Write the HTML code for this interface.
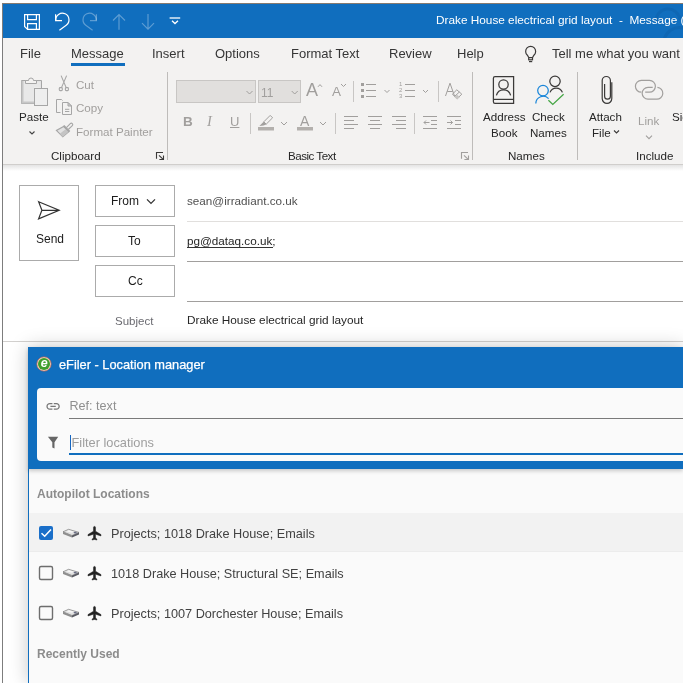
<!DOCTYPE html>
<html><head><meta charset="utf-8">
<style>
*{margin:0;padding:0;box-sizing:border-box}
html,body{width:683px;height:683px;overflow:hidden;background:#fff;font-family:"Liberation Sans",sans-serif}
body{will-change:transform}
.a{position:absolute;white-space:nowrap}
.t{z-index:3}
#frame{position:absolute;left:2px;top:3px;width:681px;height:680px;background:#fff;border-left:1px solid #7d7d7d;border-top:1px solid #857a70}
#title{position:absolute;left:3px;top:4px;width:680px;height:34px;background:#106ebe}
#tabs{position:absolute;left:3px;top:38px;width:680px;height:32px;background:#f3f2f1}
#ribbon{position:absolute;left:3px;top:70px;width:680px;height:95px;background:#f3f2f1;border-bottom:1px solid #d0cecc}
#rshadow{position:absolute;left:3px;top:165px;width:680px;height:6px;background:linear-gradient(#e4e4e4,#fff)}
.tab{font-size:13px;color:#363636;top:46px}
.rl{font-size:11.6px;color:#262626}
.dis{color:#a19f9d}
.sep{position:absolute;width:1px;background:#bebcba}
svg{position:absolute;overflow:visible}
</style></head><body>
<div id="frame"></div>
<div id="title"></div>
<div id="tabs"></div>
<div id="ribbon"></div>
<div id="rshadow"></div>


<svg width="683" height="683" style="left:0;top:0;z-index:1" fill="none">
<defs><clipPath id="tb"><rect x="3" y="4" width="680" height="34"/></clipPath></defs>
<g clip-path="url(#tb)" stroke="rgba(0,20,60,0.08)" stroke-width="3">
<path d="M656 22A12 12 0 0 1 680 20"/>
<path d="M664 40A16 16 0 0 1 683 28"/>
</g>
</svg>
<!-- title text -->
<div class="a t" style="left:436px;top:13px;font-size:11.8px;color:#fff">Drake House electrical grid layout&nbsp; -&nbsp; Message (</div>

<!-- tabs -->
<div class="a tab" style="left:20px">File</div>
<div class="a tab" style="left:71px">Message</div>
<div class="a" style="left:71px;top:63px;width:54px;height:3px;background:#106ebe"></div>
<div class="a tab" style="left:152px">Insert</div>
<div class="a tab" style="left:215px">Options</div>
<div class="a tab" style="left:291px">Format Text</div>
<div class="a tab" style="left:389px">Review</div>
<div class="a tab" style="left:457px">Help</div>
<div class="a tab" style="left:552px">Tell me what you want</div>

<!-- ribbon labels -->
<div class="a rl" style="left:19px;top:110px">Paste</div>
<div class="a rl dis" style="left:76px;top:78px">Cut</div>
<div class="a rl dis" style="left:76px;top:101px">Copy</div>
<div class="a rl dis" style="left:76px;top:125px">Format Painter</div>
<div class="a rl" style="left:51px;top:149px">Clipboard</div>
<div class="a rl" style="left:288px;top:149px;letter-spacing:-0.5px">Basic Text</div>
<div class="a rl" style="left:483px;top:110px">Address</div>
<div class="a rl" style="left:491px;top:126px">Book</div>
<div class="a rl" style="left:532px;top:110px">Check</div>
<div class="a rl" style="left:530px;top:126px">Names</div>
<div class="a rl" style="left:508px;top:149px">Names</div>
<div class="a rl" style="left:589px;top:110px">Attach</div>
<div class="a rl" style="left:592px;top:126px">File</div>
<div class="a rl dis" style="left:638px;top:114px">Link</div>
<div class="a rl" style="left:672px;top:110px">Sig</div>
<div class="a rl" style="left:636px;top:149px">Include</div>

<div class="sep" style="left:167px;top:72px;height:88px"></div>
<div class="sep" style="left:472px;top:72px;height:88px"></div>
<div class="sep" style="left:577px;top:72px;height:88px"></div>


<div class="a t" style="left:261px;top:85.5px;font-size:12px;color:#a19f9d">11</div>
<div class="a" style="left:306px;top:80px;font-size:18px;color:#a19f9d">A</div>
<div class="a" style="left:332px;top:83.5px;font-size:13.5px;color:#a19f9d">A</div>
<div class="a" style="left:183px;top:113.5px;font-size:13.5px;font-weight:bold;color:#a19f9d">B</div>
<div class="a" style="left:207px;top:113px;font-size:14.5px;font-style:italic;font-family:'Liberation Serif',serif;color:#a19f9d">I</div>
<div class="a" style="left:230px;top:114px;font-size:13px;color:#a19f9d;text-decoration:underline">U</div>
<div class="a" style="left:300px;top:113px;font-size:14px;color:#a19f9d">A</div>
<div class="a" style="left:399px;top:81px;font-size:6px;line-height:6px;color:#a19f9d">1<br>2<br>3</div>
<!-- compose -->
<div class="a" style="left:19px;top:185px;width:60px;height:76px;border:1px solid #ababab"></div>
<div class="a" style="left:36px;top:232px;font-size:12px;color:#1c1c1c">Send</div>
<div class="a" style="left:95px;top:185px;width:80px;height:32px;border:1px solid #ababab"></div>
<div class="a" style="left:111px;top:194px;font-size:12px;color:#1c1c1c">From</div>
<div class="a" style="left:95px;top:225px;width:80px;height:32px;border:1px solid #ababab"></div>
<div class="a" style="left:128px;top:234px;font-size:12px;color:#1c1c1c">To</div>
<div class="a" style="left:95px;top:265px;width:80px;height:32px;border:1px solid #ababab"></div>
<div class="a" style="left:128px;top:274px;font-size:12px;color:#1c1c1c">Cc</div>
<div class="a" style="left:187px;top:194px;font-size:11.7px;color:#505050">sean@irradiant.co.uk</div>
<div class="a" style="left:187px;top:221px;width:496px;height:1px;background:#e1dfdd"></div>
<div class="a" style="left:187px;top:234px;font-size:11.7px;color:#262626">pg@dataq.co.uk;</div>
<div class="a" style="left:187px;top:247px;width:86px;height:1px;background:#333"></div>
<div class="a" style="left:187px;top:261px;width:496px;height:1px;background:#a19f9d"></div>
<div class="a" style="left:187px;top:301px;width:496px;height:1px;background:#a19f9d"></div>
<div class="a" style="left:115px;top:314.5px;font-size:11.5px;color:#6a6a70">Subject</div>
<div class="a" style="left:187px;top:313px;font-size:11.8px;color:#262626">Drake House electrical grid layout</div>
<div class="a" style="left:3px;top:341px;width:680px;height:1px;background:#d2d0ce"></div>

<!-- dialog -->
<div class="a" style="left:28px;top:347px;width:655px;height:336px;background:#fafafa;border-left:1px solid #106ebe;box-shadow:0 0 18px rgba(0,0,0,.22)"></div>
<div class="a" style="left:28px;top:347px;width:655px;height:122px;background:#106ebe;box-shadow:0 2px 4px rgba(0,0,0,.2)"></div>
<div class="a" style="left:59px;top:357px;font-size:12.8px;color:#fff;-webkit-text-stroke:0.25px #fff">eFiler - Location manager</div>
<div class="a" style="left:37px;top:388px;width:646px;height:73px;background:#fafafa;border-radius:4px 0 0 4px"></div>
<div class="a" style="left:69.5px;top:398.5px;font-size:12.6px;color:#8f8f8f">Ref: text</div>
<div class="a" style="left:69px;top:417.5px;width:614px;height:1px;background:#7a7a7a"></div>
<div class="a" style="left:71.5px;top:435px;font-size:12.8px;color:#9e9e9e">Filter locations</div>
<div class="a" style="left:70px;top:435px;width:1px;height:15px;background:#1565c0"></div>
<div class="a" style="left:69px;top:453px;width:614px;height:2px;background:#106ebe"></div>

<div class="a" style="left:37px;top:487px;font-size:12px;font-weight:bold;color:#8c8c8c">Autopilot Locations</div>
<div class="a" style="left:29px;top:513px;width:654px;height:39px;background:#f2f2f2;border-bottom:1px solid #ececec"></div>
<div class="a" style="left:111px;top:527px;font-size:12.7px;color:#424242">Projects; 1018 Drake House; Emails</div>
<div class="a" style="left:111px;top:567px;font-size:12.7px;color:#424242">1018 Drake House; Structural SE; Emails</div>
<div class="a" style="left:111px;top:607px;font-size:12.7px;color:#424242">Projects; 1007 Dorchester House; Emails</div>
<div class="a" style="left:37px;top:647px;font-size:12px;font-weight:bold;color:#8c8c8c">Recently Used</div>


<svg width="683" height="683" style="left:0;top:0" fill="none" stroke-linecap="butt">
<!-- title bar -->
<g stroke="#fff" stroke-width="1.2">
<path d="M24.6 14.6H39.4V29.4H27.6L24.6 26.4Z"/>
<path d="M27.6 14.6V19.6H36.4V14.6"/>
<path d="M27.6 29.4V23.6H36.4V29.4"/>
<path d="M55.6 14.2V20.6H62"/>
<path d="M55.8 20.4A6.6 6.6 0 1 1 66.2 25.2L59.4 30.2"/>
</g>
<g stroke="rgba(255,255,255,.32)" stroke-width="1.2">
<path d="M96.4 14.2V20.6H90"/>
<path d="M96.2 20.4A6.6 6.6 0 1 0 85.8 25.2L92.6 30.2"/>
<path d="M119 14.5V29.7M113 20.5L119 14.5L125 20.5"/>
<path d="M148 14V29.2M142 23.2L148 29.2L154 23.2"/>
</g>
<g stroke="#fff" stroke-width="1.3">
<path d="M169.6 18H180.2"/>
<path d="M172 20.8L175 23.6L178 20.8"/>
</g>
</svg>

<svg width="683" height="683" style="left:0;top:0" fill="none">
<!-- paste -->
<g stroke="#a6a6a6" stroke-width="1">
<path d="M21.5 80.5H41.5V88" fill="#e1e1e1"/>
<path d="M34 103.5H21.5V80.5" />
<path d="M22.5 81.5H40.5V87.5H34V102.5H22.5Z" fill="#e8e8e8" stroke="none"/>
<path d="M25.5 83.5V80.5H28.5A2.5 2.5 0 0 1 33.5 80.5H36.5V83.5Z" fill="#f3f2f1"/>
<rect x="34.5" y="88.5" width="13" height="17" fill="#eeeeee"/>
</g>
<path d="M22.5 81V103" stroke="#c6c6c6" stroke-width="2"/>
<path d="M22 102.5H34" stroke="#c6c6c6" stroke-width="2"/>
<path d="M29.5 131.5L32 134L34.5 131.5" stroke="#444" stroke-width="1.1"/>
<!-- cut -->
<g stroke="#a6a6a6" stroke-width="1.1" fill="none">
<path d="M61.1 75.6L66.2 87.6M66.6 75.6L61.5 87.6"/>
<rect x="59.3" y="87.6" width="3" height="3" rx="0.8"/>
<rect x="65.4" y="87.6" width="3" height="3" rx="0.8"/>
</g>
<!-- copy -->
<g stroke="#a6a6a6" stroke-width="1">
<path d="M60.5 112.5H56.5V99.5H61.5L62.5 100.5"/>
<path d="M62.5 102.5H68L71.5 106V114.5H62.5Z" fill="#f3f2f1"/>
<path d="M68 102.5V106H71.5Z" fill="#cfcfcf"/>
<path d="M65 109.3H69.3M65 111.5H69.3"/>
</g>
<!-- format painter -->
<g stroke="#a6a6a6" stroke-width="1.1">
<path d="M63.6 126.4L68.8 131.6L62.8 136.8L56.4 130.4Z" fill="#e2e2e2"/>
<path d="M59.8 133.8L65.6 129.2L68.8 131.6L62.8 136.8Z" fill="#c4c4c4" stroke="none"/>
<path d="M63.6 125.6L69.6 131.6" stroke-width="2"/>
<path d="M66.4 127.6L70.3 123.6A1.4 1.4 0 0 1 72.3 125.6L68.3 129.5"/>
</g>
<!-- bulb -->
<g stroke="#3b3a39" stroke-width="1.2">
<path d="M528.6 57.3L527.4 55.2A5 5 0 1 1 533.9 55.2L532.7 57.3"/>
<rect x="528.7" y="57.6" width="3.8" height="2.2"/>
<path d="M529 61.6H532.2"/>
</g>
<!-- font boxes -->
<rect x="176.5" y="80.5" width="79" height="22" fill="#e1dfdd" stroke="#c8c6c4"/>
<rect x="258.5" y="80.5" width="42" height="22" fill="#e1dfdd" stroke="#c8c6c4"/>
<g stroke="#a19f9d" stroke-width="1">
<path d="M246.5 91L249.5 94L252.5 91"/>
<path d="M291.7 91L294.7 94L297.7 91"/>
<path d="M318 86.8L320 84.6L322 86.8"/>
<path d="M341 84L343.5 86.5L346 84"/>
<!-- highlighter -->
<path d="M270.2 115.4L272.6 117.8L266.2 124.2L263.8 121.8Z"/>
<path d="M263.6 121.8L266.2 124.4L263.6 125.6L259.4 126Z" fill="#a19f9d" stroke="none"/>
<path d="M281 122L284 125L287 122"/>
<path d="M320 122L323 125L326 122"/>
<!-- bullets -->
<path d="M366 84.5H376M366 90.5H376M366 96.5H376"/>
<path d="M384.5 90L387 92.5L389.5 90"/>
<path d="M405 84.5H415M405 90.5H415M405 96.5H415"/>
<path d="M423 90L425.5 92.5L428 90"/>
<!-- align -->
<path d="M344 116.5H358M344 120.5H354M344 124.5H358M344 128.5H354"/>
<path d="M368 116.5H382M370 120.5H380M368 124.5H382M370 128.5H380"/>
<path d="M392 116.5H406M396 120.5H406M392 124.5H406M396 128.5H406"/>
<path d="M423 116.5H437M431 120.5H437M431 124.5H437M423 128.5H437"/>
<path d="M424 122.5H429.5M426 120.5L424 122.5L426 124.5"/>
<path d="M447 116.5H461M455 120.5H461M455 124.5H461M447 128.5H461"/>
<path d="M447 122.5H452.5M450.5 120.5L452.5 122.5L450.5 124.5"/>
<!-- clear formatting -->
<path d="M445.5 96L450 83.2L454.5 96M447.2 91.5H452.8"/>
<path d="M456.8 89.8L461.8 94.2L457.2 98.6L452.4 94.2Z"/>
<path d="M454.6 96.4L459.4 92"/>
</g>
<g fill="#a19f9d">
<rect x="361" y="83" width="3" height="3"/><rect x="361" y="89" width="3" height="3"/><rect x="361" y="95" width="3" height="3"/>
<rect x="258" y="127" width="16" height="3.5" fill="#b3b0ad"/>
<rect x="297" y="127" width="16" height="3.5" fill="#b3b0ad"/>
</g>
<path d="M457 94.5L459.8 97.2L457.2 99.6L454.6 97.2Z" fill="#c8c6c4"/>
</svg>

<svg width="683" height="683" style="left:0;top:0;z-index:2" fill="none">
<!-- launchers -->
<g stroke="#3b3a39" stroke-width="1.1">
<path d="M156.5 158.8V152.5H163"/>
<path d="M159 155.3L163.2 159.3M163.5 155.6V159.5H159.4"/>
</g>
<g stroke="#a19f9d" stroke-width="1.1">
<path d="M461.5 158.8V152.5H468"/>
<path d="M464 155.3L468.2 159.3M468.5 155.6V159.5H464.4"/>
</g>
<!-- row separators -->
<path d="M250.5 113V134M335.5 113V134M414.5 113V134M353.5 81V102M438.5 81V102" stroke="#c8c6c4"/>
<!-- address book -->
<g stroke="#3b3a39" stroke-width="1.25">
<path d="M495 76.6H513.6V103.4H495A1.6 1.6 0 0 1 493.4 101.8V78.2A1.6 1.6 0 0 1 495 76.6Z"/>
<path d="M493.6 99.4H513.4"/>
<circle cx="503.5" cy="84.5" r="4.7"/>
<path d="M496.4 95.4A7.3 7.3 0 0 1 510.6 95.4"/>
</g>
<!-- check names -->
<g stroke-width="1.25">
<circle cx="555" cy="81.3" r="5.2" stroke="#3b3a39"/>
<path d="M550 92.4A6.6 6.6 0 0 1 562.4 92.4" stroke="#3b3a39"/>
<circle cx="543" cy="90.6" r="5.3" stroke="#1a86d9"/>
<path d="M535.8 103.4A7.4 7.4 0 0 1 548.6 98.6" stroke="#1a86d9"/>
<path d="M548.4 100.2L552.8 104.5L563.6 94.2" stroke="#44a544"/>
</g>
<!-- paperclip -->
<path d="M604.6 84V96.3A2.9 2.9 0 0 0 610.4 96.3V80.6A4.1 4.1 0 0 0 602.2 80.6V98.6A4.8 4.8 0 0 0 611.8 98.6V82.2" stroke="#3b3a39" stroke-width="1.2"/>
<!-- link -->
<g stroke="#a19f9d" stroke-width="1.2">
<path d="M645.2 92.2H649.5A5.9 5.9 0 0 0 649.5 80.4H641.3A5.9 5.9 0 0 0 641.3 92.2"/>
<path d="M652.7 87.4H648A5.85 5.85 0 0 0 648 99.1H656.5A5.85 5.85 0 0 0 657.4 87.4"/>
</g>
<path d="M646 135.6L649 138.6L652 135.6" stroke="#a19f9d" stroke-width="1.1"/>
<path d="M614 130.5L616.5 133L619 130.5" stroke="#3b3a39" stroke-width="1.1"/>
</svg>

<svg width="683" height="683" style="left:0;top:0;z-index:2" fill="none">
<path d="M38.6 201.7L59.2 210.3L38.6 218.8L41.9 210.3Z M41.9 210.3H59" stroke="#333" stroke-width="1.2" stroke-linejoin="miter"/>
<path d="M147 199.4L151 203.4L155 199.4" stroke="#333" stroke-width="1.3"/>
</svg>

<svg width="683" height="683" style="left:0;top:0;z-index:2">
<circle cx="44" cy="364" r="7.1" fill="#f3e6dc" stroke="#e2643c" stroke-width="0.7"/>
<circle cx="44" cy="364" r="6" fill="#3e9e2c"/>
<text x="44.2" y="367.2" font-family="Liberation Sans" font-weight="bold" font-style="italic" font-size="12.5" fill="#fff" text-anchor="middle">e</text>
<g transform="translate(45.06 398.41) scale(0.67)" fill="#777"><path d="M3.9 12c0-1.71 1.39-3.1 3.1-3.1h4V7H7c-2.76 0-5 2.240-5 5s2.24 5 5 5h4v-1.9H7c-1.71 0-3.1-1.39-3.1-3.1zM8 13h8v-2H8v2zm9-6h-4v1.9h4c1.710 0 3.1 1.39 3.1 3.1s-1.39 3.1-3.1 3.1h-4V17h4c2.76 0 5-2.24 5-5s-2.24-5-5-5z"/></g>
<path d="M47.9 436.8H58.2L54.5 442.2V448.6L52.3 447.6V442.2Z" fill="#666"/>
<!-- checkbox -->
<rect x="39" y="526" width="14" height="14" rx="2" fill="#1a6fc9"/>
<path d="M41.5 533.3L44.7 536.3L51 529.5" stroke="#fff" stroke-width="1.5" fill="none"/>
<rect x="39.5" y="566.5" width="13" height="13" rx="1.5" fill="none" stroke="#6e6e6e" stroke-width="1.4"/>
<rect x="39.5" y="606.5" width="13" height="13" rx="1.5" fill="none" stroke="#6e6e6e" stroke-width="1.4"/>
<!-- hdd + plane rows -->
<g id="hdd">
<path d="M63 531.8L68.6 529.3L79 532.4L72 535.5Z" fill="#e2e2e2" stroke="#7a7a7a" stroke-width="0.7"/>
<path d="M66.5 531.2L69 530.2L74 531.8L71.5 532.8Z" fill="#f6f6f6"/>
<path d="M63 531.8L72 535.5V537.6L63 533.9Z" fill="#8e8e8e"/>
<path d="M72 535.5L79 532.4V534.5L72 537.6Z" fill="#5a5b63"/>
<ellipse cx="75.2" cy="532.6" rx="1.6" ry="0.9" fill="#6b6f86"/>
</g>
<use href="#hdd" y="40"/>
<use href="#hdd" y="80"/>
<g id="plane" transform="translate(86.63 525.03) scale(0.684)" fill="#222" stroke="#222" stroke-width="0.7"><path d="M21 16v-2l-8-5V3.5c0-.83-.67-1.5-1.5-1.5S10 2.67 10 3.5V9l-8 5v2l8-2.5V19l-2 1.5V22l3.5-1 3.5 1v-1.5L13 19v-5.5l8 2.5z"/></g>
<g transform="translate(0 40)"><use href="#plane"/></g>
<g transform="translate(0 80)"><use href="#plane"/></g>
</svg>
</body></html>
